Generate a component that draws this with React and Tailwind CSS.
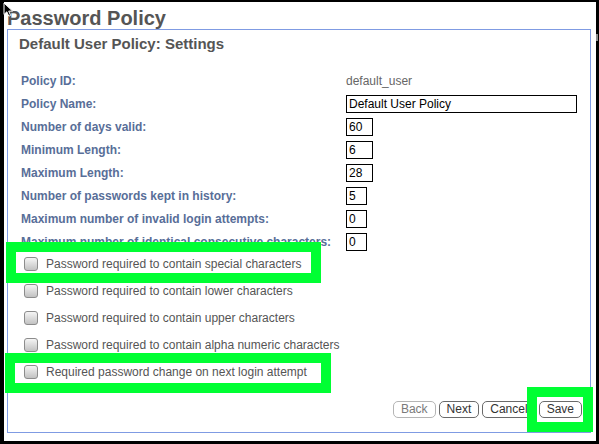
import React from 'react';

const fields = [
  { label: 'Policy ID:', text: 'default_user' },
  { label: 'Policy Name:', value: 'Default User Policy', width: 'w-[231px]' },
  { label: 'Number of days valid:', value: '60', width: 'w-[27px]' },
  { label: 'Minimum Length:', value: '6', width: 'w-[27px]' },
  { label: 'Maximum Length:', value: '28', width: 'w-[27px]' },
  { label: 'Number of passwords kept in history:', value: '5', width: 'w-[21px]' },
  { label: 'Maximum number of invalid login attempts:', value: '0', width: 'w-[21px]' },
  { label: 'Maximum number of identical consecutive characters:', value: '0', width: 'w-[21px]' },
];

const checks = [
  'Password required to contain special characters',
  'Password required to contain lower characters',
  'Password required to contain upper characters',
  'Password required to contain alpha numeric characters',
  'Required password change on next login attempt',
];

const Btn = ({ children, disabled }) => (
  <button
    className={
      disabled
        ? 'h-[17px] rounded-[5px] border border-[#b5b5b5] bg-white px-[7px] text-[12px] leading-[15px] text-[#7a7a7a]'
        : 'h-[17px] rounded-[5px] border border-[#6a6a6a] bg-white px-[7px] text-[12px] leading-[15px] text-[#333]'
    }
  >
    {children}
  </button>
);

const App = () => {
  return (
    <div className="relative w-[599px] h-[444px] bg-black pl-[4px] pt-[2px] pr-[3px] pb-[3px] font-['Liberation_Sans',Arial,sans-serif]">
      <div className="h-full bg-white pl-[3px] pr-[5px]">
        <h1 className="pt-[5px] text-[20px] leading-[22px] font-bold text-[#555]">Password Policy</h1>
        <div className="flex h-[404px] flex-col border border-[#7f9be3]">
          <h2 className="pt-[5px] pl-[11px] text-[15px] leading-[18px] font-bold text-[#555]">
            Default User Policy: Settings
          </h2>

          <div className="mt-[16px] pl-[13px]">
            {fields.map((f) => (
              <div key={f.label} className="flex h-[23px] items-center">
                <div className="w-[325px] text-[12px] font-bold text-[#586e98]">{f.label}</div>
                {f.text ? (
                  <span className="text-[12px] text-[#666]">{f.text}</span>
                ) : (
                  <input
                    readOnly
                    value={f.value}
                    className={`${f.width} h-[18px] border border-black px-[2px] text-[12px] text-black outline-none`}
                  />
                )}
              </div>
            ))}
          </div>

          <div className="-mt-[3px] pl-[16px]">
            {checks.map((c) => (
              <div key={c} className="flex h-[27px] items-center gap-[8px]">
                <span className="h-[14px] w-[14px] rounded-[3px] border border-[#8c8c8c] bg-linear-to-b from-[#f5f5f5] to-[#c2c2c2]" />
                <span className="text-[12px] text-[#555]">{c}</span>
              </div>
            ))}
          </div>

          <div className="mt-auto mb-[14px] flex justify-end gap-[3px] pr-[8px]">
            <Btn disabled>Back</Btn>
            <Btn>Next</Btn>
            <Btn>Cancel</Btn>
            <Btn>Save</Btn>
          </div>
        </div>
      </div>

      {/* highlight frames */}
      <div className="absolute left-[6px] top-[242px] h-[41px] w-[315px] border-[10px] border-[#00ff33]" />
      <div className="absolute left-[5px] top-[353px] h-[40px] w-[326px] border-[10px] border-[#00ff33]" />
      <div className="absolute left-[527px] top-[387px] h-[45px] w-[66px] border-[10px] border-[#00ff33]" />

      {/* scrollbar nub */}
      <div className="absolute left-[596px] top-[34px] h-[7px] w-[2px] bg-[#8a8a8a]" />

      {/* mouse pointer */}
      <svg className="absolute left-[3px] top-[2px]" width="12" height="16" viewBox="0 0 12 16">
        <path d="M1 1 L1 12.5 L3.8 9.8 L5.8 14.2 L7.6 13.4 L5.7 9.1 L9.6 9.1 Z" fill="#000" stroke="#fff" strokeWidth="1" />
      </svg>
    </div>
  );
};

export default App;
